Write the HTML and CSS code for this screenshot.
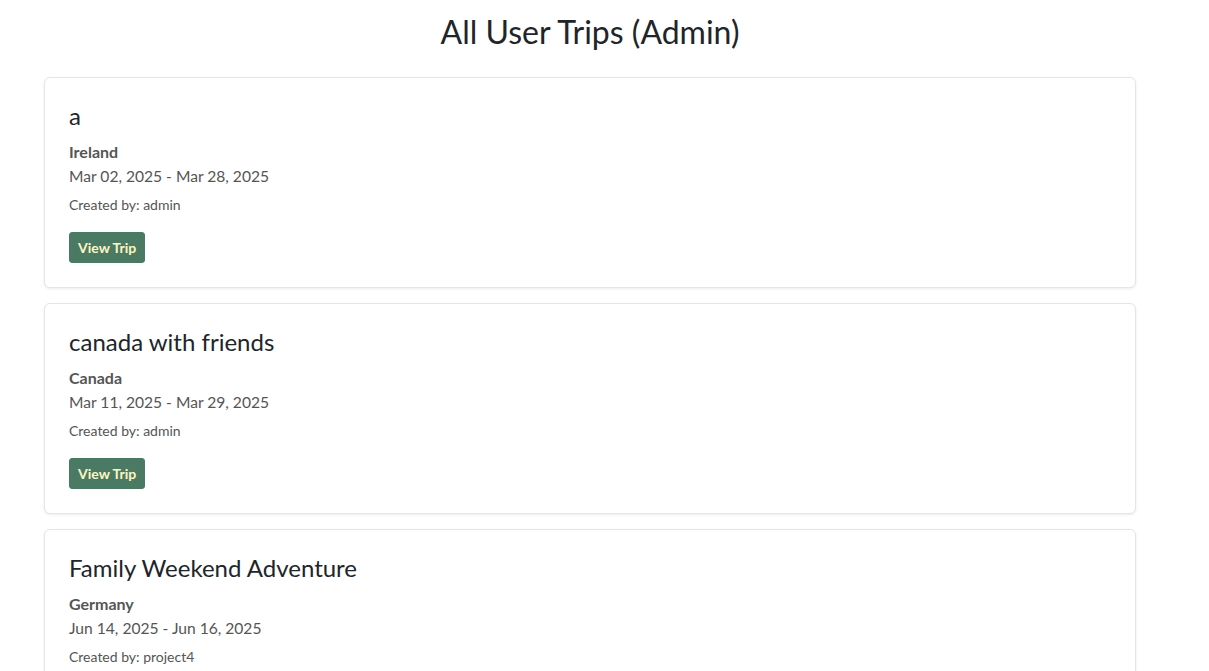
FILE: index.html
```html
<!DOCTYPE html>
<html lang="en">
<head>
<meta charset="utf-8">
<title>All User Trips (Admin)</title>
<link rel="stylesheet" href="styles.css">
</head>
<body>
<main class="page">
  <h2 class="page-title">All User Trips (Admin)</h2>
  <div class="trip-list">
    <div class="card">
      <h4 class="card-title">a</h4>
      <h6 class="card-subtitle">Ireland</h6>
      <p class="card-dates">Mar 02, 2025 - Mar 28, 2025</p>
      <p class="card-meta">Created by: admin</p>
      <a class="btn" href="#">View Trip</a>
    </div>
    <div class="card">
      <h4 class="card-title">canada with friends</h4>
      <h6 class="card-subtitle">Canada</h6>
      <p class="card-dates">Mar 11, 2025 - Mar 29, 2025</p>
      <p class="card-meta">Created by: admin</p>
      <a class="btn" href="#">View Trip</a>
    </div>
    <div class="card">
      <h4 class="card-title">Family Weekend Adventure</h4>
      <h6 class="card-subtitle">Germany</h6>
      <p class="card-dates">Jun 14, 2025 - Jun 16, 2025</p>
      <p class="card-meta">Created by: project4</p>
      <a class="btn" href="#">View Trip</a>
    </div>
  </div>
</main>
</body>
</html>
```

FILE: styles.css
```css
* { box-sizing: border-box; }
html, body { margin: 0; padding: 0; background: #fff; }
body {
  font-family: Lato, "Open Sans", sans-serif;
  color: #212529;
  overflow: hidden;
}
.page {
  width: 1092px;
  margin-left: 44px;
  padding-top: 13px;
}
.page-title {
  margin: 0 0 26px 0;
  font-size: 32px;
  font-weight: 400;
  line-height: 1.2;
  text-align: center;
  color: #212529;
}
.trip-list {
  display: flex;
  flex-direction: column;
  gap: 15px;
}
.card {
  background: #fff;
  border: 1px solid #e3e5e8;
  border-radius: 6px;
  box-shadow: 0 1px 3px rgba(0,0,0,0.08);
  padding: 24px;
  display: flex;
  flex-direction: column;
  align-items: flex-start;
}
.card-title {
  margin: 0 0 11px 0;
  font-size: 24px;
  font-weight: 400;
  line-height: 1.2;
  color: #212529;
}
.card-subtitle {
  margin: 0 0 3px 0;
  font-size: 16px;
  font-weight: 700;
  line-height: 1.2;
  color: #555;
}
.card-dates {
  margin: 0 0 6px 0;
  font-size: 15.6px;
  line-height: 24px;
  color: #555;
}
.card-meta {
  margin: 0 0 17px 0;
  font-size: 14px;
  line-height: 21px;
  color: #555;
}
.btn {
  display: inline-block;
  height: 31px;
  padding: 4px 8px;
  border: 1px solid #4a7a63;
  border-radius: 3px;
  background: #4a7a63;
  color: #fdf5c4;
  font-size: 14px;
  font-weight: 700;
  line-height: 21px;
  text-decoration: none;
}
```
